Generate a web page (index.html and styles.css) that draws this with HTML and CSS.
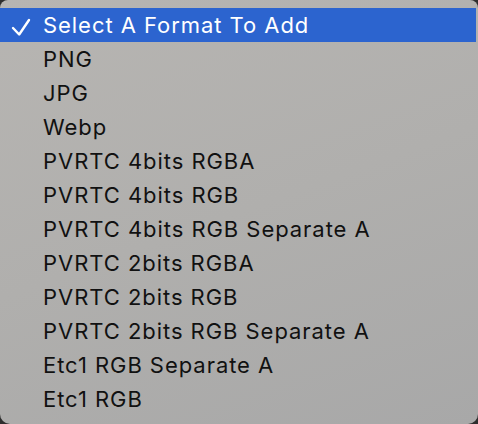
FILE: index.html
```html
<!DOCTYPE html>
<html>
<head>
<meta charset="utf-8">
<link rel="stylesheet" href="styles.css">
</head>
<body>
<div class="menu">
  <div class="item selected"><span class="check"><svg width="43" height="34" viewBox="0 0 43 34"><path d="M13 20 L19.2 26.5 L29 12" fill="none" stroke="#fff" stroke-width="2.4" stroke-linecap="round" stroke-linejoin="round"/></svg></span><span class="label">Select A Format To Add</span></div>
  <div class="item"><span class="check"></span><span class="label">PNG</span></div>
  <div class="item"><span class="check"></span><span class="label">JPG</span></div>
  <div class="item"><span class="check"></span><span class="label">Webp</span></div>
  <div class="item"><span class="check"></span><span class="label">PVRTC 4bits RGBA</span></div>
  <div class="item"><span class="check"></span><span class="label">PVRTC 4bits RGB</span></div>
  <div class="item"><span class="check"></span><span class="label">PVRTC 4bits RGB Separate A</span></div>
  <div class="item"><span class="check"></span><span class="label">PVRTC 2bits RGBA</span></div>
  <div class="item"><span class="check"></span><span class="label">PVRTC 2bits RGB</span></div>
  <div class="item"><span class="check"></span><span class="label">PVRTC 2bits RGB Separate A</span></div>
  <div class="item"><span class="check"></span><span class="label">Etc1 RGB Separate A</span></div>
  <div class="item"><span class="check"></span><span class="label">Etc1 RGB</span></div>
</div>
</body>
</html>
```
FILE: styles.css
```css
html, body {
  margin: 0;
  padding: 0;
  background: #2e2e2e;
}
.menu {
  width: 478px;
  height: 424px;
  box-sizing: border-box;
  padding: 8px 0;
  border-radius: 8px 8px 10px 10px;
  background: linear-gradient(160deg, #b7b5b2 0%, #b0afad 50%, #a8a8a8 100%);
  font-family: Inter, "Noto Sans", sans-serif;
  font-size: 22px;
  letter-spacing: 0.95px;
  color: #111;
  display: flex;
  flex-direction: column;
  overflow: hidden;
}
.item {
  height: 34px;
  display: flex;
  align-items: center;
  margin-right: 2px;
}
.check {
  width: 43px;
  height: 34px;
  flex: none;
  display: flex;
}
.selected {
  background: #2c64cf;
  color: #fff;
}
.label {
  line-height: 34px;
  white-space: nowrap;
}
```
